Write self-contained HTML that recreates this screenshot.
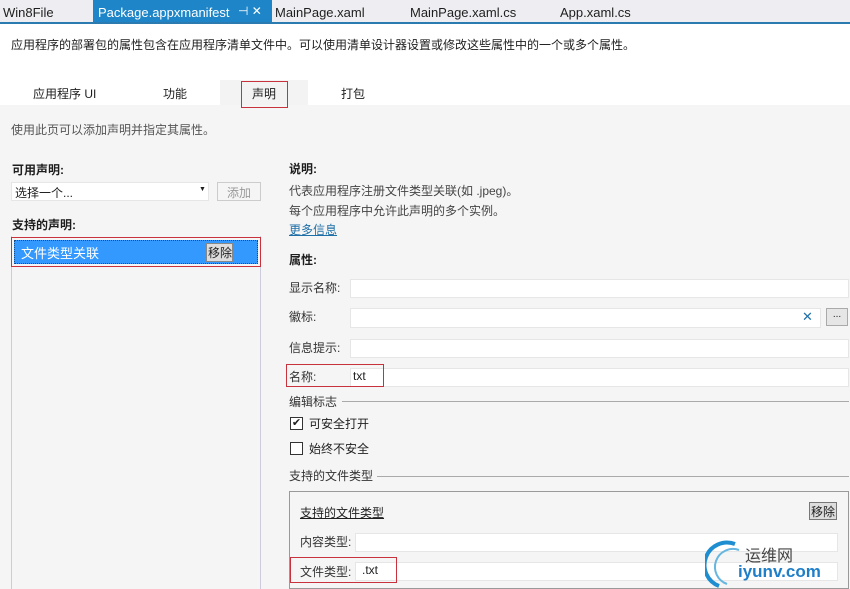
<!DOCTYPE html>
<html><head><meta charset="utf-8"><style>
*{margin:0;padding:0;box-sizing:border-box}
body{width:850px;height:589px;overflow:hidden;background:#f5f5f5;font-family:"Liberation Sans","Noto Sans CJK SC",sans-serif;font-size:12px;color:#1e1e1e;position:relative}
.a{position:absolute;white-space:nowrap}
.in{position:absolute;background:#fff;border:1px solid #e6e6e6;height:19px}
.red{position:absolute;border:1px solid #c8323c}
</style></head><body>
<div class="a" style="left:0;top:0;width:850px;height:22px;background:#eeeef2"></div>
<div class="a" style="left:0;top:22px;width:850px;height:2px;background:#2b7bb0"></div>
<div class="a" style="left:93px;top:0;width:179px;height:22px;background:#1e86c8"></div>
<div class="a" style="left:3px;top:5px;font-size:13px">Win8File</div>
<div class="a" style="left:98px;top:5px;font-size:13px;color:#fff">Package.appxmanifest</div>
<div class="a" style="left:238px;top:4px;font-size:12px;color:#fff">⊣ ✕</div>
<div class="a" style="left:275px;top:5px;font-size:13px">MainPage.xaml</div>
<div class="a" style="left:410px;top:5px;font-size:13px">MainPage.xaml.cs</div>
<div class="a" style="left:560px;top:5px;font-size:13px">App.xaml.cs</div>
<div class="a" style="left:0;top:24px;width:850px;height:81px;background:#fff"></div>
<div class="a" style="left:11px;top:36px">应用程序的部署包的属性包含在应用程序清单文件中。可以使用清单设计器设置或修改这些属性中的一个或多个属性。</div>
<div class="a" style="left:220px;top:80px;width:88px;height:25px;background:#f3f3f3"></div>
<div class="a" style="left:33px;top:85px">应用程序 UI</div>
<div class="a" style="left:163px;top:85px">功能</div>
<div class="red" style="left:241px;top:81px;width:47px;height:27px"></div>
<div class="a" style="left:252px;top:85px">声明</div>
<div class="a" style="left:341px;top:85px">打包</div>
<div class="a" style="left:11px;top:121px;color:#555">使用此页可以添加声明并指定其属性。</div>

<div class="a" style="left:12px;top:161px;font-weight:bold">可用声明:</div>
<div class="in" style="left:11px;top:182px;width:198px"></div>
<div class="a" style="left:15px;top:184px">选择一个...</div>
<div class="a" style="left:199px;top:186px;font-size:7px">▼</div>
<div class="a" style="left:217px;top:182px;width:44px;height:19px;border:1px solid #ccc;color:#999;padding:1px 0 0 9px">添加</div>
<div class="a" style="left:12px;top:216px;font-weight:bold">支持的声明:</div>
<div class="a" style="left:11px;top:236px;width:250px;height:353px;border-left:1px solid #ccd;border-right:1px solid #ccd"></div>
<div class="red" style="left:11px;top:237px;width:250px;height:30px"></div>
<div class="a" style="left:14px;top:240px;width:244px;height:24px;background:#3399ff;border:1px dotted #1a4a80"></div>
<div class="a" style="left:21px;top:243px;color:#fff;font-size:13px">文件类型关联</div>
<div class="a" style="left:206px;top:243px;width:27px;height:19px;background:#ddd;border:1px solid #888;padding:0 0 0 1px;font-size:12px">移除</div>

<div class="a" style="left:289px;top:160px;font-weight:bold">说明:</div>
<div class="a" style="left:289px;top:182px;color:#444">代表应用程序注册文件类型关联(如 .jpeg)。</div>
<div class="a" style="left:289px;top:202px;color:#444">每个应用程序中允许此声明的多个实例。</div>
<div class="a" style="left:289px;top:221px;color:#1e6fa8;text-decoration:underline">更多信息</div>
<div class="a" style="left:289px;top:251px;font-weight:bold">属性:</div>
<div class="a" style="left:289px;top:279px;color:#333">显示名称:</div>
<div class="in" style="left:350px;top:279px;width:499px"></div>
<div class="a" style="left:289px;top:308px;color:#333">徽标:</div>
<div class="in" style="left:350px;top:308px;width:471px;height:20px"></div>
<div class="a" style="left:802px;top:309px;color:#1e6fa8;font-size:13px">✕</div>
<div class="a" style="left:826px;top:308px;width:22px;height:18px;background:#e6e6e6;border:1px solid #aaa;font-size:10px;text-align:center">...</div>
<div class="a" style="left:289px;top:339px;color:#333">信息提示:</div>
<div class="in" style="left:350px;top:339px;width:499px"></div>
<div class="in" style="left:350px;top:368px;width:499px"></div>
<div class="red" style="left:286px;top:364px;width:98px;height:23px"></div>
<div class="a" style="left:289px;top:368px;color:#333">名称:</div>
<div class="a" style="left:353px;top:369px">txt</div>

<div class="a" style="left:289px;top:393px;color:#333">编辑标志</div>
<div class="a" style="left:342px;top:401px;width:507px;height:1px;background:#aaa"></div>
<div class="a" style="left:290px;top:417px;width:13px;height:13px;border:1px solid #333;background:#fff;font-size:11px;line-height:11px;text-align:center">✔</div>
<div class="a" style="left:309px;top:415px">可安全打开</div>
<div class="a" style="left:290px;top:442px;width:13px;height:13px;border:1px solid #333;background:#fff"></div>
<div class="a" style="left:309px;top:440px">始终不安全</div>
<div class="a" style="left:289px;top:467px;color:#333">支持的文件类型</div>
<div class="a" style="left:377px;top:476px;width:472px;height:1px;background:#aaa"></div>
<div class="a" style="left:289px;top:491px;width:560px;height:98px;border:1px solid #999"></div>
<div class="a" style="left:300px;top:504px;text-decoration:underline">支持的文件类型</div>
<div class="a" style="left:809px;top:502px;width:28px;height:18px;background:#ddd;border:1px solid #777;padding:0 0 0 1px">移除</div>
<div class="a" style="left:300px;top:533px;color:#333">内容类型:</div>
<div class="in" style="left:355px;top:533px;width:483px"></div>
<div class="in" style="left:355px;top:562px;width:483px"></div>
<div class="red" style="left:290px;top:557px;width:107px;height:26px"></div>
<div class="a" style="left:300px;top:563px;color:#333">文件类型:</div>
<div class="a" style="left:362px;top:563px">.txt</div>

<svg class="a" style="left:705px;top:540px" width="40" height="49"><path d="M30 4 A22 22 0 0 0 14 46" fill="none" stroke="#1e8ed0" stroke-width="4"/><path d="M34 10 A17 17 0 0 0 22 44" fill="none" stroke="#66b6e0" stroke-width="2"/></svg>
<div class="a" style="left:745px;top:542px;font-size:16px;color:#444">运维网</div>
<div class="a" style="left:738px;top:562px;font-size:17px;font-weight:bold;color:#1e7ec8">iyunv.com</div>
</body></html>
